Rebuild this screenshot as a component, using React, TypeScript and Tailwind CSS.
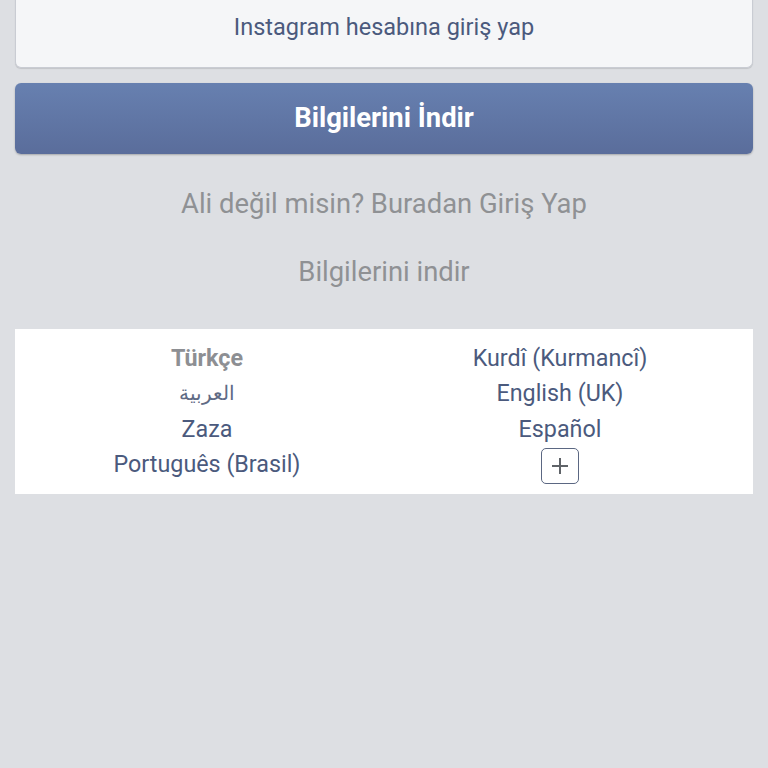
const languages: [string, string | null][] = [
  ['Türkçe', 'Kurdî (Kurmancî)'],
  ['العربية', 'English (UK)'],
  ['Zaza', 'Español'],
  ['Português (Brasil)', null],
];

export default function App() {
  return (
    <div
      className="min-h-[768px] w-[768px] overflow-hidden bg-[#dddfe3] px-[15px]"
      style={{ fontFamily: 'Roboto, "Noto Sans", sans-serif' }}
    >
      <div className="-mt-[20px] flex h-[88px] items-end justify-center rounded-b-md border border-t-0 border-[#c9ccd3] bg-[#f5f6f8] pb-[28px] shadow-[0_1px_1px_rgba(0,0,0,0.12)]">
        <span className="text-[23.5px] leading-none text-[#4b5a7d]">Instagram hesabına giriş yap</span>
      </div>

      <button
        type="button"
        className="mt-[15px] flex h-[71px] w-full items-center justify-center rounded-md bg-gradient-to-b from-[#6780b0] to-[#5a6d9b] text-[27.4px] font-bold text-white shadow-[0_1px_2px_rgba(0,0,0,0.25)]"
      >
        Bilgilerini İndir
      </button>

      <p className="mt-[34px] text-center text-[27.4px] leading-[32px] text-[#8f9194]">Ali değil misin? Buradan Giriş Yap</p>
      <p className="mt-[36px] text-center text-[27.4px] leading-[32px] text-[#8f9194]">Bilgilerini indir</p>

      <div className="mt-[41px] grid grid-cols-2 bg-white pt-[12px] pb-[10px] text-[23.3px] leading-[35.3px] text-[#4b5a7d]">
        {languages.map(([left, right], i) => (
          <div key={i} className="contents">
            <div className={`pl-[15px] text-center ${i === 0 ? 'font-bold text-[#8d8f93]' : ''} ${i === 1 ? 'text-[20px] text-[#5f6b85]' : ''}`}>{left}</div>
            <div className="flex justify-center pr-[17px]">
              {right ? (
                right
              ) : (
                <span className="mt-[1px] flex h-[36px] w-[38px] items-center justify-center rounded-[5px] border border-[#5b6782]">
                  <svg width="20" height="20" viewBox="0 0 20 20" fill="none" stroke="#5f6368" strokeWidth="2">
                    <path d="M10 2v16M2 10h16" />
                  </svg>
                </span>
              )}
            </div>
          </div>
        ))}
      </div>
    </div>
  );
}
